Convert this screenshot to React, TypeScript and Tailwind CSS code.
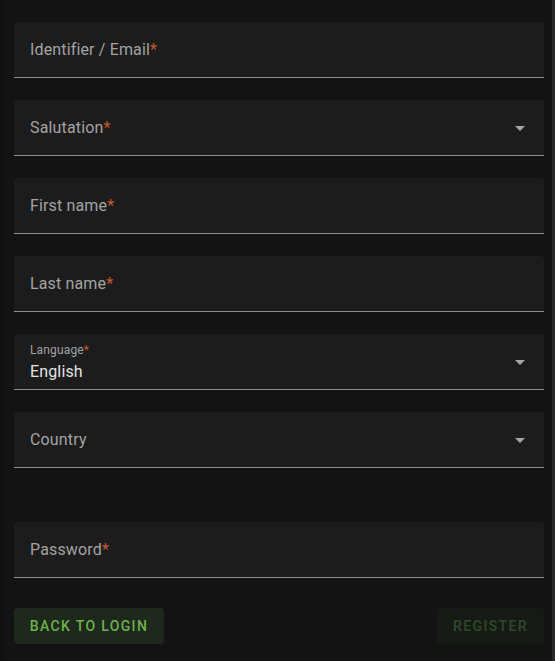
import React from "react";

const Req = () => <span className="text-[#c4592c]">*</span>;

function Caret() {
  return (
    <svg width="24" height="24" viewBox="0 0 24 24" className="absolute right-[12px] top-1/2 -translate-y-1/2 fill-[#a6a6a6]">
      <path d="M7 10l5 5 5-5z" />
    </svg>
  );
}

function Field({ label, required = true, select = false, value }: { label: string; required?: boolean; select?: boolean; value?: string }) {
  return (
    <div className="relative h-[56px] rounded-t-[4px] bg-[#1c1c1c] border-b border-[#8c8c8c] tracking-[0.15px]">
      {value ? (
        <>
          <div className="absolute left-[16px] top-[8px] text-[12px] leading-[16px] text-[#a3a3a3]">
            {label}
            {required && <Req />}
          </div>
          <div className="absolute left-[16px] top-[26px] text-[16px] leading-[24px] text-[#e4e4e4]">{value}</div>
        </>
      ) : (
        <div className="absolute left-[16px] top-[16px] text-[16px] leading-[24px] text-[#a3a3a3]">
          {label}
          {required && <Req />}
        </div>
      )}
      {select && <Caret />}
    </div>
  );
}

export default function App() {
  return (
    <div className="relative h-[661px] w-[555px] overflow-hidden bg-[#131313]" style={{ fontFamily: "Roboto, sans-serif" }}>
      <div className="absolute left-0 top-0 h-full w-[6px] bg-gradient-to-r from-[#0f0f0f] to-[#131313]" />
      <div className="absolute right-0 top-0 h-full w-[3px] bg-[#272727]" />
      <div className="flex flex-col pl-[14px] pr-[11px] pt-[22px]">
        <div className="flex flex-col gap-[22px]">
          <Field label="Identifier / Email" />
          <Field label="Salutation" select />
          <Field label="First name" />
          <Field label="Last name" />
          <Field label="Language" select value="English" />
          <Field label="Country" required={false} select />
        </div>
        <div className="mt-[54px]">
          <Field label="Password" />
        </div>
        <div className="mt-[30px] flex justify-between">
          <button className="h-[36px] w-[150px] rounded-[4px] bg-[#1f281c] text-[14px] font-medium uppercase tracking-[1.35px] text-[#6bb34a]">
            Back to login
          </button>
          <button disabled className="h-[36px] w-[107px] rounded-[4px] bg-[#161a15] text-[14px] font-medium uppercase tracking-[1.35px] text-[#2f4a28]">
            Register
          </button>
        </div>
      </div>
    </div>
  );
}
